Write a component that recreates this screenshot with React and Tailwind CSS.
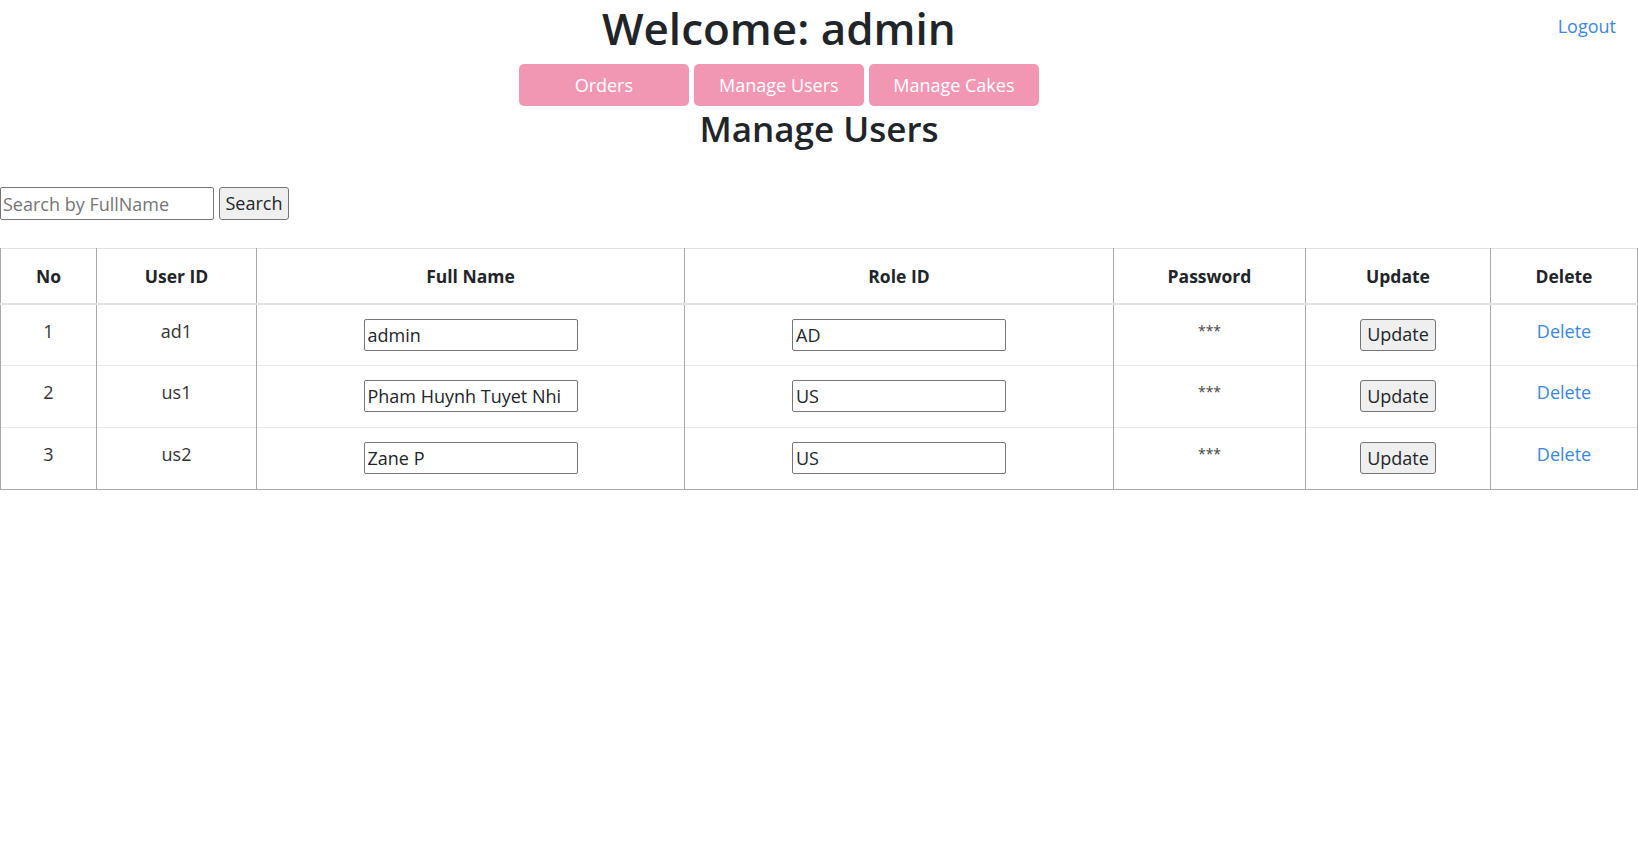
import React, { useState } from "react";

const users = [
  { no: 1, id: "ad1", name: "admin", role: "AD" },
  { no: 2, id: "us1", name: "Pham Huynh Tuyet Nhi", role: "US" },
  { no: 3, id: "us2", name: "Zane P", role: "US" },
];

export default function App() {
  const [search, setSearch] = useState("");

  return (
    <div className="min-h-screen bg-white text-[#212529] font-['Open_Sans',sans-serif]">
      <div className="flex">
        <div className="flex-1 flex flex-col items-center">
          <h1 className="text-[44px] leading-[56px] font-semibold">Welcome: admin</h1>
          <div className="flex gap-[5px] mt-[8px]">
            <button className="w-[170px] h-[42px] bg-[#f197b3] text-white text-[18px] rounded-[5px]">Orders</button>
            <button className="w-[170px] h-[42px] bg-[#f197b3] text-white text-[18px] rounded-[5px]">Manage Users</button>
            <button className="w-[170px] h-[42px] bg-[#f197b3] text-white text-[18px] rounded-[5px]">Manage Cakes</button>
          </div>
        </div>
        <a href="#" className="mr-[22px] mt-[13px] text-[18px] text-[#3b86e0] h-fit">Logout</a>
      </div>

      <h2 className="text-center text-[35px] leading-[44px] font-semibold mt-[1px]">Manage Users</h2>

      <form className="flex gap-[5px] mt-[36px]" onSubmit={(e) => e.preventDefault()}>
        <input
          value={search}
          onChange={(e) => setSearch(e.target.value)}
          placeholder="Search by FullName"
          className="w-[214px] h-[33px] border border-[#767676] rounded-[2px] px-[2px] text-[18px] placeholder:text-[#757575] outline-none"
        />
        <button className="w-[70px] h-[33px] border border-[#767676] bg-[#efefef] rounded-[3px] text-[18px]">Search</button>
      </form>

      <table className="w-full mt-[28px] border-collapse text-[18px]">
        <thead>
          <tr className="h-[55px] border-t border-[#dee2e6] border-b-2 border-b-[#dee2e6] text-[17.5px]">
            <th className="w-[96px] border-l border-r border-[#a9a9a9] font-bold">No</th>
            <th className="w-[160px] border-r border-[#a9a9a9] font-bold">User ID</th>
            <th className="w-[428px] border-r border-[#a9a9a9] font-bold">Full Name</th>
            <th className="w-[429px] border-r border-[#a9a9a9] font-bold">Role ID</th>
            <th className="w-[192px] border-r border-[#a9a9a9] font-bold">Password</th>
            <th className="w-[185px] border-r border-[#a9a9a9] font-bold">Update</th>
            <th className="border-r border-[#a9a9a9] font-bold">Delete</th>
          </tr>
        </thead>
        <tbody>
          {users.map((u, i) => (
            <tr
              key={u.id}
              className={
                i === users.length - 1
                  ? "h-[62px] border-b border-[#a9a9a9]"
                  : "h-[62px] border-b border-[#e6e6e6]"
              }
            >
              <td className="border-l border-r border-[#a9a9a9] text-center align-top pt-[13px] text-[#333]">{u.no}</td>
              <td className="border-r border-[#a9a9a9] text-center align-top pt-[13px] text-[#333]">{u.id}</td>
              <td className="border-r border-[#a9a9a9] align-top pt-[14px]">
                <div className="flex justify-center">
                  <input
                    defaultValue={u.name}
                    className="w-[214px] h-[32px] border border-[#767676] rounded-[2px] px-[3px] text-[18px] outline-none"
                  />
                </div>
              </td>
              <td className="border-r border-[#a9a9a9] align-top pt-[14px]">
                <div className="flex justify-center">
                  <input
                    defaultValue={u.role}
                    className="w-[214px] h-[32px] border border-[#767676] rounded-[2px] px-[3px] text-[18px] outline-none"
                  />
                </div>
              </td>
              <td className="border-r border-[#a9a9a9] text-center align-top pt-[15px] text-[14px] text-[#444]">***</td>
              <td className="border-r border-[#a9a9a9] align-top pt-[14px]">
                <div className="flex justify-center">
                  <button className="w-[76px] h-[32px] border border-[#767676] bg-[#efefef] rounded-[3px] text-[18px]">Update</button>
                </div>
              </td>
              <td className="border-r border-[#a9a9a9] text-center align-top pt-[13px]">
                <a href="#" className="text-[#3b86e0]">Delete</a>
              </td>
            </tr>
          ))}
        </tbody>
      </table>
    </div>
  );
}
